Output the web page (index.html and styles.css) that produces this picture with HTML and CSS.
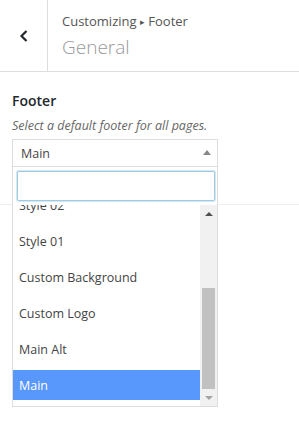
FILE: index.html
```html
<!DOCTYPE html>
<html lang="en">
<head>
    <meta charset="UTF-8">
    <meta name="viewport" content="width=device-width, initial-scale=1.0">
    <title>Customizing Footer</title>
    <link rel="stylesheet" href="styles.css">
</head>
<body>
    <header class="panel-header">
        <button class="back-btn" aria-label="Back">
            <svg width="10" height="14" viewBox="0 0 10 14">
                <polyline points="7.5,2 2.5,7 7.5,12" fill="none" stroke="#23282d" stroke-width="2.2"/>
            </svg>
        </button>
        <div class="panel-title">
            <span class="crumb">Customizing <span class="crumb-sep">&#9656;</span> Footer</span>
            <h2>General</h2>
        </div>
    </header>

    <section class="control">
        <span class="control-label">Footer</span>
        <span class="control-desc">Select a default footer for all pages.</span>

        <div class="select-wrap">
            <div class="select-box">
                <span>Main</span>
                <span class="select-arrow"></span>
            </div>

            <div class="dropdown">
                <div class="search-row">
                    <input type="text" class="search-input">
                </div>
                <div class="options">
                    <ul class="option-list">
                        <li>Style 02</li>
                        <li>Style 01</li>
                        <li>Custom Background</li>
                        <li>Custom Logo</li>
                        <li>Main Alt</li>
                        <li class="active">Main</li>
                    </ul>
                    <div class="scrollbar">
                        <span class="sb-btn sb-up"></span>
                        <div class="sb-track"><div class="sb-thumb"></div></div>
                        <span class="sb-btn sb-down"></span>
                    </div>
                </div>
            </div>
        </div>
    </section>
</body>
</html>
```

FILE: styles.css
```css
html, body {
    min-height: 100%;
}
body {
    margin: 0;
    min-height: 423px;
    background-color: #fff;
    font-family: 'Open Sans', 'Noto Sans', sans-serif;
    color: #444;
}
.panel-header {
    display: flex;
    height: 71px;
    border-bottom: 1px solid #ddd;
}
.back-btn {
    width: 48px;
    padding: 0;
    border: none;
    border-right: 1px solid #ddd;
    background: none;
    display: flex;
    align-items: center;
    justify-content: center;
}
.panel-title {
    padding: 12px 0 0 14px;
    display: flex;
    flex-direction: column;
}
.crumb {
    font-size: 13px;
    line-height: 18px;
    color: #555;
}
.crumb-sep {
    font-size: 9px;
    vertical-align: 1px;
}
.panel-title h2 {
    margin: 3px 0 0;
    font-size: 19px;
    line-height: 26px;
    font-weight: 300;
    color: #999;
}
.control {
    padding: 19px 12px 37px;
    border-bottom: 1px solid #eee;
    display: flex;
    flex-direction: column;
}
.control-label {
    font-size: 14px;
    line-height: 20px;
    font-weight: 600;
    color: #23282d;
}
.control-desc {
    margin-top: 5px;
    font-size: 12.5px;
    line-height: 20px;
    font-style: italic;
    color: #666;
}
.select-wrap {
    position: relative;
    margin-top: 3px;
    width: 206px;
}
.select-box {
    box-sizing: border-box;
    height: 28px;
    border: 1px solid #ddd;
    display: flex;
    align-items: center;
    justify-content: space-between;
    padding: 0 6px 0 8px;
    font-size: 12.5px;
    color: #444;
}
.select-arrow {
    width: 0;
    height: 0;
    border-left: 4px solid transparent;
    border-right: 4px solid transparent;
    border-bottom: 5px solid #888;
    margin-top: -1px;
}
.dropdown {
    position: absolute;
    top: 28px;
    left: 0;
    z-index: 10;
    width: 206px;
    box-sizing: border-box;
    background: #fff;
    border: 1px solid #ddd;
    border-top: none;
}
.search-row {
    padding: 4px 2px 4px 4px;
}
.search-input {
    display: block;
    box-sizing: border-box;
    width: 198px;
    height: 30px;
    margin: 0;
    border: 1px solid #9fcbe3;
    border-radius: 2px;
    box-shadow: 0 0 1px 1px #cfe6f2;
    outline: none;
}
.options {
    display: flex;
    height: 201px;
}
.option-list {
    flex: 1;
    list-style: none;
    margin: 0;
    padding: 0;
    overflow: hidden;
}
.option-list li {
    height: 30px;
    margin-bottom: 6px;
    padding-left: 6px;
    display: flex;
    align-items: center;
    font-size: 12.5px;
    color: #444;
}
.option-list li:first-child {
    margin-top: -15px;
}
.option-list li.active {
    background-color: #5897fb;
    color: #fff;
}
.scrollbar {
    width: 17px;
    background-color: #f1f1f1;
    display: flex;
    flex-direction: column;
}
.sb-btn {
    height: 17px;
    display: flex;
    align-items: center;
    justify-content: center;
}
.sb-up::before,
.sb-down::before {
    content: "";
    border-left: 4px solid transparent;
    border-right: 4px solid transparent;
}
.sb-up::before {
    border-bottom: 4px solid #505050;
}
.sb-down::before {
    border-top: 4px solid #a3a3a3;
}
.sb-track {
    flex: 1;
    display: flex;
    flex-direction: column;
    justify-content: flex-end;
}
.sb-thumb {
    height: 101px;
    margin: 0 2px;
    background-color: #c1c1c1;
}
```
